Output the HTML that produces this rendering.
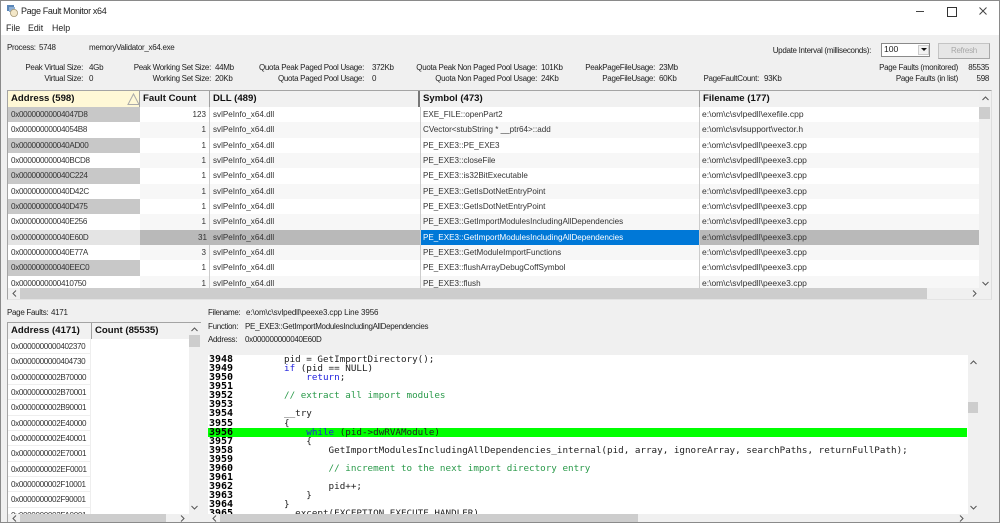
<!DOCTYPE html>
<html><head><meta charset="utf-8"><style>
html,body{margin:0;padding:0;width:1000px;height:523px;overflow:hidden;background:#f0f0f0}
body{position:relative;font-family:"Liberation Sans",sans-serif;font-size:8px;letter-spacing:-.3px;color:#222;filter:blur(.3px)}
.a{position:absolute;white-space:nowrap;line-height:11px}
.r{text-align:right}
.b{position:absolute}
.h{position:absolute;font-weight:bold;font-size:9.6px;letter-spacing:0;line-height:16px;top:0;color:#111;background:#f1f1f1;height:16px;box-sizing:border-box;padding-left:3px;border-right:1px solid #a0a0a0}
#list{position:absolute;left:8px;top:107px;width:971px;height:181px;overflow:hidden;background:#fff}
.row{position:absolute;left:0;width:971px;height:15.33px;line-height:15.33px;font-size:8.1px;letter-spacing:0;color:#333}
.row.o{background:#f7f7f7}
.row span{position:absolute;top:0;height:15.33px;white-space:nowrap;box-sizing:border-box}
.c0{left:0;width:132px;padding-left:3px;letter-spacing:-.3px}
.c1{left:132px;width:70px;text-align:right;padding-right:3px;border-right:1px solid #ccc}
.c2{left:202px;width:210px;padding-left:3px}
.c3{left:412px;width:280px;padding-left:2px;border-left:1px solid #ccc;border-right:1px solid #ccc}
.c4{left:692px;width:279px;padding-left:2px;font-size:8.5px}
.g{background:#c8c8c8}
.s{background:#b9b9b9}
.l{background:#e4e4e4}
.w{background:#fff}
.sel{background:#0078d7;color:#fff}
#list2{position:absolute;left:8px;top:339px;width:181px;height:175px;overflow:hidden;background:#fff}
#list2 div{position:absolute;left:0;width:83px;height:15.33px;line-height:15.33px;padding-left:3px;box-sizing:border-box;font-size:8.1px;letter-spacing:-.35px;color:#333;border-right:1px solid #eee;border-bottom:1px solid #eee}
#code{position:absolute;left:208px;top:355px;width:760px;height:159px;overflow:hidden;background:#fff}
#code div{position:absolute;left:0;width:759px;height:9.08px;line-height:9.08px;font-family:"DejaVu Sans Mono","Liberation Mono",monospace;font-size:9.25px;letter-spacing:0;white-space:pre;color:#222}
#code b{position:absolute;left:1px;top:0;color:#000;font-size:10px}
#code i{position:absolute;left:76px;top:0;font-style:normal}
.k{color:#2222dd}.m{color:#2a9a4a}
svg{position:absolute;overflow:visible}
</style></head><body>
<div class="b" style="left:0;top:0;width:1000px;height:35px;background:#fff"></div>
<div class="b" style="left:0;top:0;width:1000px;height:1px;background:#8a8a8a"></div>
<div class="b" style="left:0;top:0;width:1px;height:523px;background:#8a8a8a"></div>
<div class="b" style="left:999px;top:0;width:1px;height:523px;background:#8a8a8a"></div>
<svg style="left:6px;top:4px" width="13" height="13" viewBox="0 0 13 13"><rect x="1" y="1" width="7" height="6" fill="#5a86b8"/><rect x="3" y="3" width="6" height="5" fill="#8fb0d4"/><circle cx="8" cy="9" r="3.6" fill="#f3e7c8" stroke="#a89a78" stroke-width=".8"/></svg>
<div class="a" style="left:21px;top:6px;font-size:9px;letter-spacing:-.35px;color:#222">Page Fault Monitor x64</div>
<div class="b" style="left:916px;top:11px;width:8px;height:1px;background:#444"></div>
<div class="b" style="left:947px;top:7px;width:8px;height:8px;border:1px solid #333;box-sizing:content-box"></div>
<svg style="left:979px;top:7px" width="9" height="9" viewBox="0 0 9 9"><path d="M.5.5l7 7M7.5.5l-7 7" stroke="#444" stroke-width="1" fill="none"/></svg>
<div class="a" style="left:6px;top:23px;font-size:8.8px;letter-spacing:0">File</div>
<div class="a" style="left:28px;top:23px;font-size:8.8px;letter-spacing:0">Edit</div>
<div class="a" style="left:52px;top:23px;font-size:8.8px;letter-spacing:0">Help</div>

<div class="a" style="left:7px;top:42px">Process:</div><div class="a" style="left:39px;top:42px">5748</div><div class="a" style="left:89px;top:42px">memoryValidator_x64.exe</div>

<div class="a r" style="right:917px;top:62px">Peak Virtual Size:</div><div class="a" style="left:89px;top:62px">4Gb</div>
<div class="a r" style="right:917px;top:73px">Virtual Size:</div><div class="a" style="left:89px;top:73px">0</div>
<div class="a r" style="right:789px;top:62px">Peak Working Set Size:</div><div class="a" style="left:215px;top:62px">44Mb</div>
<div class="a r" style="right:789px;top:73px">Working Set Size:</div><div class="a" style="left:215px;top:73px">20Kb</div>
<div class="a r" style="right:636px;top:62px">Quota Peak Paged Pool Usage:</div><div class="a" style="left:372px;top:62px">372Kb</div>
<div class="a r" style="right:636px;top:73px">Quota Paged Pool Usage:</div><div class="a" style="left:372px;top:73px">0</div>
<div class="a r" style="right:463px;top:62px">Quota Peak Non Paged Pool Usage:</div><div class="a" style="left:541px;top:62px">101Kb</div>
<div class="a r" style="right:463px;top:73px">Quota Non Paged Pool Usage:</div><div class="a" style="left:541px;top:73px">24Kb</div>
<div class="a r" style="right:345px;top:62px">PeakPageFileUsage:</div><div class="a" style="left:659px;top:62px">23Mb</div>
<div class="a r" style="right:345px;top:73px">PageFileUsage:</div><div class="a" style="left:659px;top:73px">60Kb</div>
<div class="a r" style="right:241px;top:73px">PageFaultCount:</div><div class="a" style="left:764px;top:73px">93Kb</div>
<div class="a r" style="right:42px;top:62px">Page Faults (monitored)</div><div class="a r" style="right:11px;top:62px">85535</div>
<div class="a r" style="right:42px;top:73px">Page Faults (in list)</div><div class="a r" style="right:11px;top:73px">598</div>

<div class="a r" style="right:129px;top:45px">Update Interval (milliseconds):</div>
<div class="b" style="left:881px;top:43px;width:49px;height:14px;background:#fff;border:1px solid #8a8a8a;box-sizing:border-box"></div>
<div class="a" style="left:884px;top:44px;font-size:8.6px;letter-spacing:0">100</div>
<div class="b" style="left:918px;top:45px;width:11px;height:10px;background:#f2f2f2;border:1px solid #ccc;box-sizing:border-box"></div>
<svg style="left:921px;top:48px" width="6" height="4"><path d="M0 0h6L3 3z" fill="#111"/></svg>
<div class="b" style="left:938px;top:43px;width:52px;height:16px;background:#e6e6e6;border:1px solid #c4c4c4;border-right-color:#a8a8a8;border-bottom-color:#a8a8a8;box-sizing:border-box"></div>
<div class="a" style="left:951px;top:45px;color:#a8a8a8">Refresh</div>

<!-- top list frame -->
<div class="b" style="left:7px;top:90px;width:985px;height:210px;background:#f0f0f0;border:1px solid #a4a4a4;border-right-color:#ddd;border-bottom-color:#e4e4e4;box-sizing:border-box"></div>
<div class="h" style="left:8px;top:91px;width:132px;background:#fff8d6">Address (598)</div>
<svg style="left:127px;top:93px" width="13" height="12"><path d="M1 11.5L6.5 1 12 11.5z" fill="none" stroke="#aaa"/></svg>
<div class="h" style="left:140px;top:91px;width:70px">Fault Count</div>
<div class="h" style="left:210px;top:91px;width:210px;border-right:2px solid #777">DLL (489)</div>
<div class="h" style="left:420px;top:91px;width:280px">Symbol (473)</div>
<div class="h" style="left:700px;top:91px;width:279px;border-right:0">Filename (177)</div>

<div id="list">
<div class="row" style="top:0"><span class="c0 g">0x00000000004047D8</span><span class="c1">123</span><span class="c2">svlPeInfo_x64.dll</span><span class="c3">EXE_FILE::openPart2</span><span class="c4">e:\om\c\svlpedll\exefile.cpp</span></div>
<div class="row o" style="top:15.33px"><span class="c0 w">0x00000000004054B8</span><span class="c1">1</span><span class="c2">svlPeInfo_x64.dll</span><span class="c3">CVector&lt;stubString * __ptr64&gt;::add</span><span class="c4">e:\om\c\svlsupport\vector.h</span></div>
<div class="row" style="top:30.66px"><span class="c0 g">0x000000000040AD00</span><span class="c1">1</span><span class="c2">svlPeInfo_x64.dll</span><span class="c3">PE_EXE3::PE_EXE3</span><span class="c4">e:\om\c\svlpedll\peexe3.cpp</span></div>
<div class="row o" style="top:45.99px"><span class="c0 w">0x000000000040BCD8</span><span class="c1">1</span><span class="c2">svlPeInfo_x64.dll</span><span class="c3">PE_EXE3::closeFile</span><span class="c4">e:\om\c\svlpedll\peexe3.cpp</span></div>
<div class="row" style="top:61.32px"><span class="c0 g">0x000000000040C224</span><span class="c1">1</span><span class="c2">svlPeInfo_x64.dll</span><span class="c3">PE_EXE3::is32BitExecutable</span><span class="c4">e:\om\c\svlpedll\peexe3.cpp</span></div>
<div class="row o" style="top:76.65px"><span class="c0 w">0x000000000040D42C</span><span class="c1">1</span><span class="c2">svlPeInfo_x64.dll</span><span class="c3">PE_EXE3::GetIsDotNetEntryPoint</span><span class="c4">e:\om\c\svlpedll\peexe3.cpp</span></div>
<div class="row" style="top:91.98px"><span class="c0 g">0x000000000040D475</span><span class="c1">1</span><span class="c2">svlPeInfo_x64.dll</span><span class="c3">PE_EXE3::GetIsDotNetEntryPoint</span><span class="c4">e:\om\c\svlpedll\peexe3.cpp</span></div>
<div class="row o" style="top:107.31px"><span class="c0 w">0x000000000040E256</span><span class="c1">1</span><span class="c2">svlPeInfo_x64.dll</span><span class="c3">PE_EXE3::GetImportModulesIncludingAllDependencies</span><span class="c4">e:\om\c\svlpedll\peexe3.cpp</span></div>
<div class="row" style="top:122.64px"><span class="c0 l">0x000000000040E60D</span><span class="c1 s" style="border:0">31</span><span class="c2 s">svlPeInfo_x64.dll</span><span class="c3 sel">PE_EXE3::GetImportModulesIncludingAllDependencies</span><span class="c4 s">e:\om\c\svlpedll\peexe3.cpp</span></div>
<div class="row o" style="top:137.97px"><span class="c0 w">0x000000000040E77A</span><span class="c1">3</span><span class="c2">svlPeInfo_x64.dll</span><span class="c3">PE_EXE3::GetModuleImportFunctions</span><span class="c4">e:\om\c\svlpedll\peexe3.cpp</span></div>
<div class="row" style="top:153.3px"><span class="c0 g">0x000000000040EEC0</span><span class="c1">1</span><span class="c2">svlPeInfo_x64.dll</span><span class="c3">PE_EXE3::flushArrayDebugCoffSymbol</span><span class="c4">e:\om\c\svlpedll\peexe3.cpp</span></div>
<div class="row o" style="top:168.63px"><span class="c0 w">0x0000000000410750</span><span class="c1">1</span><span class="c2">svlPeInfo_x64.dll</span><span class="c3">PE_EXE3::flush</span><span class="c4">e:\om\c\svlpedll\peexe3.cpp</span></div>
</div>
<!-- top scrollbars -->
<div class="b" style="left:979px;top:107px;width:11px;height:12px;background:#cdcdcd"></div>
<svg style="left:982px;top:96px" width="7" height="5"><path d="M.5 4L3.5 1l3 3" fill="none" stroke="#555"/></svg>
<svg style="left:982px;top:281px" width="7" height="5"><path d="M.5 1l3 3 3-3" fill="none" stroke="#555"/></svg>
<div class="b" style="left:20px;top:288px;width:907px;height:11px;background:#cdcdcd"></div>
<svg style="left:12px;top:290px" width="5" height="7"><path d="M4 .5L1 3.5l3 3" fill="none" stroke="#555"/></svg>
<svg style="left:972px;top:290px" width="5" height="7"><path d="M1 .5l3 3-3 3" fill="none" stroke="#555"/></svg>

<div class="a" style="left:7px;top:307px">Page Faults:</div><div class="a" style="left:51px;top:307px">4171</div>
<div class="a" style="left:208px;top:307px">Filename:</div><div class="a" style="left:246px;top:307px;letter-spacing:-.1px">e:\om\c\svlpedll\peexe3.cpp Line 3956</div>
<div class="a" style="left:208px;top:321px">Function:</div><div class="a" style="left:245px;top:321px">PE_EXE3::GetImportModulesIncludingAllDependencies</div>
<div class="a" style="left:208px;top:334px">Address:</div><div class="a" style="left:245px;top:334px">0x000000000040E60D</div>

<!-- bottom list -->
<div class="b" style="left:7px;top:322px;width:194px;height:201px;background:#f0f0f0;border-left:1px solid #a4a4a4;border-top:1px solid #a4a4a4;box-sizing:border-box"></div>
<div class="h" style="left:8px;top:323px;width:84px;background:#f1f1f1">Address (4171)</div>
<div class="h" style="left:92px;top:323px;width:97px;border-right:0">Count (85535)</div>
<div id="list2">
<div style="top:0">0x0000000000402370</div>
<div style="top:15.33px">0x0000000000404730</div>
<div style="top:30.66px">0x0000000002B70000</div>
<div style="top:45.99px">0x0000000002B70001</div>
<div style="top:61.32px">0x0000000002B90001</div>
<div style="top:76.65px">0x0000000002E40000</div>
<div style="top:91.98px">0x0000000002E40001</div>
<div style="top:107.31px">0x0000000002E70001</div>
<div style="top:122.64px">0x0000000002EF0001</div>
<div style="top:137.97px">0x0000000002F10001</div>
<div style="top:153.3px">0x0000000002F90001</div>
<div style="top:168.63px">0x0000000002FA0001</div>
</div>
<div class="b" style="left:189px;top:335px;width:11px;height:12px;background:#cdcdcd"></div>
<svg style="left:191px;top:327px" width="7" height="5"><path d="M.5 4L3.5 1l3 3" fill="none" stroke="#555"/></svg>
<svg style="left:191px;top:505px" width="7" height="5"><path d="M.5 1l3 3 3-3" fill="none" stroke="#555"/></svg>
<div class="b" style="left:20px;top:514px;width:146px;height:9px;background:#cdcdcd"></div>
<svg style="left:12px;top:515px" width="5" height="7"><path d="M4 .5L1 3.5l3 3" fill="none" stroke="#555"/></svg>
<svg style="left:180px;top:515px" width="5" height="7"><path d="M1 .5l3 3-3 3" fill="none" stroke="#555"/></svg>

<!-- code -->
<div id="code">
<div style="top:0"><b>3948</b><i>pid = GetImportDirectory();</i></div>
<div style="top:9.08px"><b>3949</b><i><span class="k">if</span> (pid == NULL)</i></div>
<div style="top:18.16px"><b>3950</b><i>    <span class="k">return</span>;</i></div>
<div style="top:27.24px"><b>3951</b></div>
<div style="top:36.32px"><b>3952</b><i class="m">// extract all import modules</i></div>
<div style="top:45.4px"><b>3953</b></div>
<div style="top:54.48px"><b>3954</b><i>__try</i></div>
<div style="top:63.56px"><b>3955</b><i>{</i></div>
<div style="top:72.64px;background:#00ff00"><b>3956</b><i>    <span class="k">while</span> (pid-&gt;dwRVAModule)</i></div>
<div style="top:81.72px"><b>3957</b><i>    {</i></div>
<div style="top:90.8px"><b>3958</b><i>        GetImportModulesIncludingAllDependencies_internal(pid, array, ignoreArray, searchPaths, returnFullPath);</i></div>
<div style="top:99.88px"><b>3959</b></div>
<div style="top:108.96px"><b>3960</b><i class="m">        // increment to the next import directory entry</i></div>
<div style="top:118.04px"><b>3961</b></div>
<div style="top:127.12px"><b>3962</b><i>        pid++;</i></div>
<div style="top:136.2px"><b>3963</b><i>    }</i></div>
<div style="top:145.28px"><b>3964</b><i>}</i></div>
<div style="top:154.36px"><b>3965</b><i>  except(EXCEPTION_EXECUTE_HANDLER)</i></div>
</div>
<div class="b" style="left:968px;top:402px;width:10px;height:11px;background:#cdcdcd"></div>
<svg style="left:970px;top:360px" width="7" height="5"><path d="M.5 4L3.5 1l3 3" fill="none" stroke="#555"/></svg>
<svg style="left:970px;top:505px" width="7" height="5"><path d="M.5 1l3 3 3-3" fill="none" stroke="#555"/></svg>
<div class="b" style="left:220px;top:514px;width:418px;height:9px;background:#cdcdcd"></div>
<svg style="left:212px;top:515px" width="5" height="7"><path d="M4 .5L1 3.5l3 3" fill="none" stroke="#555"/></svg>
<svg style="left:959px;top:515px" width="5" height="7"><path d="M1 .5l3 3-3 3" fill="none" stroke="#555"/></svg>
<div class="b" style="left:0;top:522px;width:1000px;height:1px;background:#8a8a8a"></div>
</body></html>
